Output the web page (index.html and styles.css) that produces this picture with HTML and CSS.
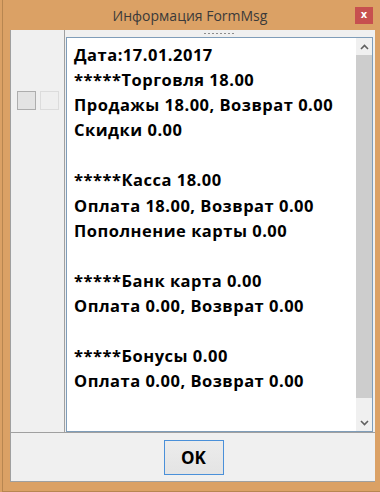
FILE: index.html
```html
<!DOCTYPE html>
<html lang="ru">
<head>
    <meta charset="UTF-8">
    <title>Информация FormMsg</title>
    <link rel="stylesheet" href="styles.css">
</head>
<body>
    <div class="window">
        <div class="titlebar">
            <span class="title">Информация FormMsg</span>
            <span class="close">x</span>
        </div>
        <div class="client">
            <div class="main">
                <div class="side">
                    <span class="sq sq-dark"></span>
                    <span class="sq"></span>
                </div>
                <div class="right">
                    <div class="grip"><span class="dots"></span></div>
                    <div class="memo">
                        <div class="text">
                            <div>Дата:17.01.2017</div>
                            <div>*****Торговля 18.00</div>
                            <div>Продажы 18.00, Возврат 0.00</div>
                            <div>Скидки 0.00</div>
                            <div>&nbsp;</div>
                            <div>*****Касса 18.00</div>
                            <div>Оплата 18.00, Возврат 0.00</div>
                            <div>Пополнение карты 0.00</div>
                            <div>&nbsp;</div>
                            <div>*****Банк карта 0.00</div>
                            <div>Оплата 0.00, Возврат 0.00</div>
                            <div>&nbsp;</div>
                            <div>*****Бонусы 0.00</div>
                            <div>Оплата 0.00, Возврат 0.00</div>
                        </div>
                        <div class="scroll">
                            <div class="arrow">
                                <svg width="9" height="6" viewBox="0 0 9 6"><path d="M1 5 L4.5 1.5 L8 5" fill="none" stroke="#606060" stroke-width="1.6"/></svg>
                            </div>
                            <div class="thumb"></div>
                            <div class="track"></div>
                            <div class="arrow">
                                <svg width="9" height="6" viewBox="0 0 9 6"><path d="M1 1 L4.5 4.5 L8 1" fill="none" stroke="#606060" stroke-width="1.6"/></svg>
                            </div>
                        </div>
                    </div>
                </div>
            </div>
            <div class="bottom">
                <button class="ok">OK</button>
            </div>
        </div>
    </div>
</body>
</html>
```

FILE: styles.css
```css
body {
    margin: 0;
    padding: 0;
    background: #d9a064;
}

.window {
    width: 380px;
    height: 492px;
    box-sizing: border-box;
    background: #dba165;
    border-left: 2px solid #dba165;
    box-shadow: inset 1px 0 0 #b88650, inset 0 -1px 0 #b88650;
    display: flex;
    flex-direction: column;
}

.titlebar {
    height: 30px;
    position: relative;
    display: flex;
    justify-content: center;
    align-items: center;
}

.title {
    font-family: "Open Sans", sans-serif;
    font-size: 14px;
    color: #3a3a3a;
    margin-left: -2px;
}

.close {
    position: absolute;
    left: 353px;
    top: 7px;
    width: 18px;
    height: 17px;
    background: #c7504f;
    color: #fff;
    font-family: "DejaVu Sans", sans-serif;
    font-weight: bold;
    font-size: 10px;
    line-height: 16px;
    text-align: center;
}

.client {
    margin-left: 8px;
    width: 365px;
    height: 452px;
    box-sizing: border-box;
    background: #f0f0f0;
    border-left: 1px solid #a0a0a0;
    border-bottom: 1px solid #a0a0a0;
    display: flex;
    flex-direction: column;
}

.main {
    height: 402px;
    display: flex;
    border-bottom: 1px solid #a0a0a0;
}

.side {
    width: 54px;
    border-right: 1px solid #a0a0a0;
    display: flex;
    gap: 4px;
    padding: 61px 0 0 6px;
    box-sizing: border-box;
}

.sq {
    width: 17px;
    height: 17px;
    border: 1px solid #dcdcdc;
    background: #efefef;
}

.sq-dark {
    border-color: #adadad;
    background: #e3e3e3;
}

.right {
    margin-left: 1px;
    width: 307px;
    display: flex;
    flex-direction: column;
}

.grip {
    height: 7px;
    padding: 3px 0 0 138px;
    box-sizing: border-box;
}

.dots {
    display: block;
    width: 30px;
    height: 1px;
    background: linear-gradient(to right, #8c8c8c 50%, transparent 50%) 0 0 / 4px 1px repeat-x;
}

.memo {
    flex: 1;
    border: 1px solid #7f9db9;
    background: #fff;
    display: flex;
}

.text {
    flex: 1;
    padding: 4px 0 0 7px;
    font-family: "Open Sans", sans-serif;
    font-weight: bold;
    font-size: 16.5px;
    letter-spacing: 0.5px;
    line-height: 25.1px;
    color: #000;
}

.scroll {
    width: 16px;
    background: #f0f0f0;
    display: flex;
    flex-direction: column;
}

.arrow {
    height: 17px;
    display: flex;
    align-items: center;
    justify-content: center;
}

.thumb {
    height: 343px;
    background: #cdcdcd;
}

.track {
    flex: 1;
}

.bottom {
    flex: 1;
    display: flex;
    justify-content: center;
    padding-top: 7px;
    box-sizing: border-box;
}

.ok {
    width: 60px;
    height: 35px;
    margin-left: 1px;
    border: 1px solid #4a90d9;
    background: linear-gradient(#ececec, #e4e4e4);
    font-family: "Open Sans", sans-serif;
    font-weight: bold;
    font-size: 17px;
    color: #000;
    padding: 0;
}
```
